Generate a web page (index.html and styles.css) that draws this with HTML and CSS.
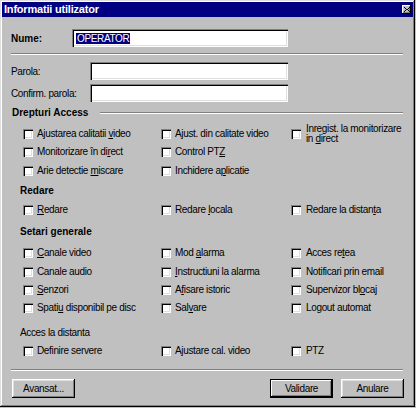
FILE: index.html
```html
<!DOCTYPE html>
<html>
<head>
<meta charset="utf-8">
<link rel="stylesheet" href="styles.css">
</head>
<body>
<div class="window">
  <div class="titlebar">
    <span class="title">Informatii utilizator</span>
    <span class="close"><svg width="6" height="5" viewBox="0 0 6 5"><path d="M0 0h1v1H0zM5 0h1v1H5zM1 1h1v1H1zM4 1h1v1H4zM2 2h2v1H2zM1 3h1v1H1zM4 3h1v1H4zM0 4h1v1H0zM5 4h1v1H5z" fill="#000"/></svg></span>
  </div>
  <div class="content">
    <div class="field-row name-row">
      <span class="field-label bold name-label">Nume:</span>
      <span class="input name-input"><span class="sel">OPERATOR</span></span>
    </div>
    <div class="sep sep-top"></div>
    <div class="field-row pw-row">
      <span class="field-label pw-label">Parola:</span>
      <span class="input pw-input"></span>
    </div>
    <div class="field-row pw-row2">
      <span class="field-label pw-label">Confirm. parola:</span>
      <span class="input pw-input"></span>
    </div>

    <div class="heading heading-rights">
      <span class="bold">Drepturi Access</span>
      <span class="heading-line"></span>
    </div>
    <div class="grid grid-rights">
      <div class="cb"><span class="box"></span><span>Ajustarea calitatii <u>v</u>ideo</span></div>
      <div class="cb"><span class="box"></span><span>Ajust. din calitate video</span></div>
      <div class="cb cb3"><span class="box"></span><span class="two">Inregist. la monitorizare<br>in <u>d</u>irect</span></div>
      <div class="cb"><span class="box"></span><span>Monitorizare în di<u>r</u>ect</span></div>
      <div class="cb"><span class="box"></span><span>Control PT<u>Z</u></span></div>
      <div class="cb cb3"></div>
      <div class="cb"><span class="box"></span><span>Arie detectie <u>m</u>iscare</span></div>
      <div class="cb"><span class="box"></span><span>Inchidere a<u>p</u>licatie</span></div>
      <div class="cb cb3"></div>
    </div>

    <div class="heading sub heading-replay"><span class="bold">Redare</span></div>
    <div class="grid grid-replay">
      <div class="cb"><span class="box"></span><span><u>R</u>edare</span></div>
      <div class="cb"><span class="box"></span><span>Redare <u>l</u>ocala</span></div>
      <div class="cb cb3"><span class="box"></span><span>Redare la distan<u>t</u>a</span></div>
    </div>

    <div class="heading sub heading-general"><span class="bold">Setari generale</span></div>
    <div class="grid grid-general">
      <div class="cb"><span class="box"></span><span><u>C</u>anale video</span></div>
      <div class="cb"><span class="box"></span><span>Mod <u>a</u>larma</span></div>
      <div class="cb cb3"><span class="box"></span><span>Acces re<u>t</u>ea</span></div>
      <div class="cb"><span class="box"></span><span>Canale audio</span></div>
      <div class="cb"><span class="box"></span><span><u>I</u>nstructiuni la alarma</span></div>
      <div class="cb cb3"><span class="box"></span><span>Notificari prin email</span></div>
      <div class="cb"><span class="box"></span><span><u>S</u>enzori</span></div>
      <div class="cb"><span class="box"></span><span>A<u>f</u>isare istoric</span></div>
      <div class="cb cb3"><span class="box"></span><span>Supervizor bl<u>o</u>caj</span></div>
      <div class="cb"><span class="box"></span><span>Spati<u>u</u> disponibil pe disc</span></div>
      <div class="cb"><span class="box"></span><span>Sal<u>v</u>are</span></div>
      <div class="cb cb3"><span class="box"></span><span>Logout automat</span></div>
    </div>

    <div class="heading sub heading-remote"><span>Acces la distanta</span></div>
    <div class="grid grid-remote">
      <div class="cb"><span class="box"></span><span>Definire servere</span></div>
      <div class="cb"><span class="box"></span><span>Ajustare cal. video</span></div>
      <div class="cb cb3"><span class="box"></span><span>PTZ</span></div>
    </div>

    <div class="sep sep-bottom"></div>
    <div class="buttons">
      <span class="btn">Avansat...</span>
      <span class="spacer"></span>
      <span class="btn default">Validare</span>
      <span class="btn">Anulare</span>
    </div>
  </div>
</div>
</body>
</html>
```

FILE: styles.css
```css
html, body {
  margin: 0;
  padding: 0;
  background: #c0c0c0;
}
body {
  width: 416px;
  height: 408px;
  overflow: hidden;
  font-family: "Liberation Sans", Arial, sans-serif;
  font-size: 10px;
  letter-spacing: -0.35px;
  color: #000;
}
.window {
  box-sizing: border-box;
  width: 415px;
  height: 407px;
  padding: 2px;
  background: #c0c0c0;
  box-shadow: inset -1px -1px #000, inset 1px 1px #dfdfdf, inset -2px -2px #808080, inset 2px 2px #fff;
}
.titlebar {
  height: 15px;
  background: #000080;
  color: #fff;
  display: flex;
  align-items: center;
  justify-content: space-between;
  padding: 0 2px 0 2px;
}
.title {
  font-weight: bold;
  font-size: 11px;
  letter-spacing: -0.2px;
  line-height: 15px;
}
.close {
  width: 9px;
  height: 9px;
  background: #c0c0c0;
  box-shadow: inset -1px -1px #000, inset 1px 1px #fff, inset -2px -2px #808080;
  display: flex;
  align-items: center;
  justify-content: center;
}
.close svg { display: block; }
.content {
  padding: 0 10px 0 9px;
}
.bold {
  font-weight: bold;
  letter-spacing: 0;
}
.field-row {
  display: flex;
  align-items: center;
  height: 18px;
}
.name-row { margin-top: 12px; }
.name-label { width: 61px; }
.pw-label { width: 79px; }
.pw-row { margin-top: 7px; }
.pw-row2 { margin-top: 4px; }
.input {
  box-sizing: border-box;
  height: 18px;
  background: #fff;
  box-shadow: inset 1px 1px #808080, inset 2px 2px #000, inset -1px -1px #fff, inset -2px -2px #dfdfdf;
  display: flex;
  align-items: center;
  padding-left: 4px;
}
.name-input { width: 216px; }
.pw-input { width: 198px; }
.sel {
  background: #000080;
  color: #fff;
  line-height: 11px;
  padding: 0 1px;
}
.sep {
  height: 0;
  border-top: 1px solid #808080;
  border-bottom: 1px solid #fff;
}
.sep-top { margin-top: 6px; }
.sep-bottom { margin-top: 9px; }
.heading {
  display: flex;
  align-items: center;
  height: 12px;
  line-height: 12px;
}
.heading-rights { margin-top: 5px; padding-left: 1px; }
.heading-line {
  flex: 1;
  margin-left: 12px;
  border-top: 1px solid #808080;
  border-bottom: 1px solid #fff;
}
.sub { padding-left: 9px; }
.heading-replay { margin-top: 5px; }
.heading-general { margin-top: 7px; }
.heading-remote { margin-top: 10px; }
.grid {
  display: grid;
  grid-template-columns: 138px 130px 1fr;
  grid-auto-rows: 18.3px;
  padding-left: 12px;
}
.grid-rights { margin-top: 6px; }
.grid-replay { margin-top: 4px; }
.grid-general { margin-top: 6px; }
.grid-remote { margin-top: 2px; }
.cb {
  display: flex;
  align-items: center;
  gap: 4px;
  white-space: nowrap;
  line-height: 12px;
}
.cb3 { gap: 5px; }
.two { line-height: 10px; }
.box {
  flex: none;
  box-sizing: border-box;
  width: 10px;
  height: 10px;
  background: #fff;
  box-shadow: inset 1px 1px #808080, inset 2px 2px #000, inset -1px -1px #fff, inset -2px -2px #dfdfdf;
}
u { text-decoration: underline; text-underline-offset: 1px; }
.buttons {
  display: flex;
  gap: 8px;
  margin: 8px -1px 0 1px;
}
.spacer { flex: 1; }
.btn {
  box-sizing: border-box;
  width: 63px;
  height: 19px;
  display: flex;
  align-items: center;
  justify-content: center;
  background: #c0c0c0;
  box-shadow: inset -1px -1px #000, inset 1px 1px #fff, inset -2px -2px #808080, inset 2px 2px #dfdfdf;
}
.btn.default {
  box-shadow: inset 0 0 0 1px #000, inset -2px -2px #000, inset 2px 2px #fff, inset -3px -3px #808080;
}
```
